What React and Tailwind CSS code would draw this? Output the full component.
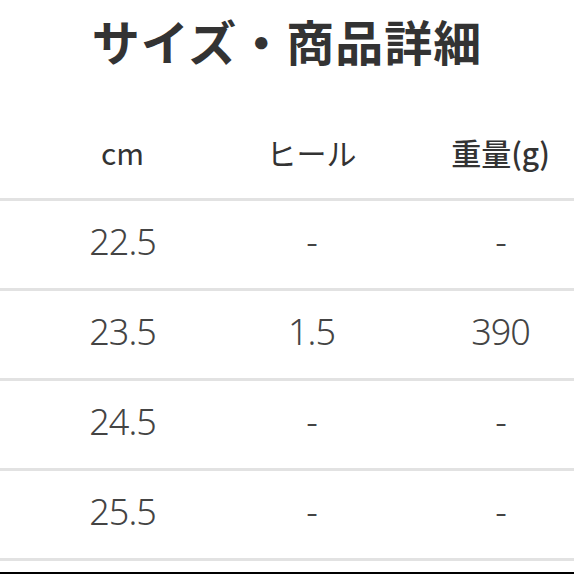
import React from 'react';

const rows = [
  ['22.5', '-', '-'],
  ['23.5', '1.5', '390'],
  ['24.5', '-', '-'],
  ['25.5', '-', '-'],
];

const font = { fontFamily: '"Noto Sans CJK JP", "Noto Sans", sans-serif' };
const digits = { fontFamily: '"Noto Sans", "Noto Sans CJK JP", sans-serif' };

export default function App() {
  return (
    <div className="w-full h-[574px] bg-white overflow-hidden flex flex-col text-[#333]" style={font}>
      {/* Title */}
      <h1 className="h-[80px] flex items-center justify-center text-[48px] font-bold leading-none tracking-[1px]">
        サイズ・商品詳細
      </h1>

      {/* Header */}
      <div className="h-[118px] pt-[26px] flex items-center">
        <div className="ml-[28px] grid grid-cols-[189px_189px_189px] text-[30px] leading-none">
          <div className="text-center">cm</div>
          <div className="text-center">ヒール</div>
          <div className="text-center font-medium">重量(g)</div>
        </div>
      </div>

      {/* Rows */}
      {rows.map((row) => (
        <div key={row[0]} className="h-[90px] pb-[5px] border-t-[3px] border-[#e2e2e2] flex items-center">
          <div
            className="ml-[28px] grid grid-cols-[189px_189px_189px] text-[36px] font-light leading-none tracking-[-1px] text-[#444]"
            style={digits}
          >
            {row.map((cell, i) => (
              <div key={i} className="text-center">{cell}</div>
            ))}
          </div>
        </div>
      ))}
      <div className="border-t-[3px] border-[#e2e2e2]" />

      <div className="mt-auto h-[2px] bg-black" />
    </div>
  );
}
